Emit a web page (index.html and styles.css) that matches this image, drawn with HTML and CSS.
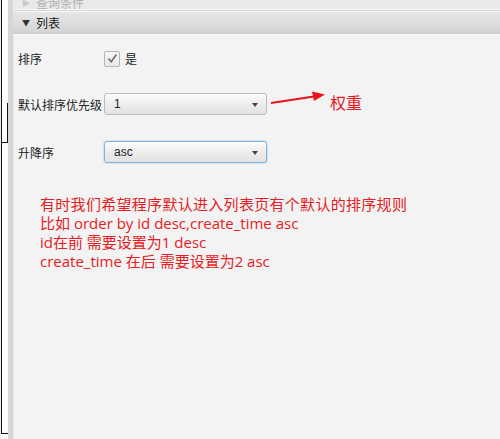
FILE: index.html
```html
<!DOCTYPE html>
<html>
<head>
<meta charset="utf-8">
<link rel="stylesheet" href="styles.css">
</head>
<body>
<div class="screen">
  <div class="gutter">
    <div class="gutter-top"></div>
    <div class="gutter-box"></div>
    <div class="gutter-rest"></div>
  </div>
  <div class="panel">
    <div class="hdr hdr-collapsed"><span class="tri">▶</span><span class="hdr-text">查询条件</span></div>
    <div class="hdr hdr-open"><span class="tri">▼</span><span class="hdr-text">列表</span></div>
    <div class="body">
      <div class="row row-check">
        <span class="label">排序</span>
        <span class="check"><svg width="13" height="13" viewBox="0 0 13 13"><path d="M2.5 6.5 L5.2 9.8 L10.5 2.5" fill="none" stroke="#6d6d6d" stroke-width="1.6"/></svg></span>
        <span class="check-text">是</span>
      </div>
      <div class="row row-prio">
        <span class="label">默认排序优先级</span>
        <span class="combo"><span class="val">1</span><span class="arr"></span></span>
        <svg class="red-arrow" width="58" height="16" viewBox="0 0 58 16"><path d="M1 12 L44 5.5" stroke="#e8141c" stroke-width="2" fill="none"/><path d="M42 0.5 L55 3.5 L44 10 Z" fill="#e8141c"/></svg>
        <span class="weight">权重</span>
      </div>
      <div class="row row-order">
        <span class="label">升降序</span>
        <span class="combo focused"><span class="val">asc</span><span class="arr"></span></span>
      </div>
      <div class="note">
        <p class="cjk">有时我们希望程序默认进入列表页有个默认的排序规则</p>
        <p>比如 order by id desc,create_time asc</p>
        <p>id在前 需要设置为1 desc</p>
        <p>create_time 在后 需要设置为2 asc</p>
      </div>
    </div>
  </div>
</div>
</body>
</html>
```
FILE: styles.css
```css
html, body {
  margin: 0;
  padding: 0;
  background: #ffffff;
}
.screen {
  display: flex;
  width: 500px;
  height: 439px;
  overflow: hidden;
  font-family: "Noto Sans CJK SC", "Liberation Sans", sans-serif;
}
.gutter {
  width: 8px;
  display: flex;
  flex-direction: column;
  background: #fdfdfd;
  border-left: 1px solid #ececec;
  box-sizing: border-box;
}
.gutter-top {
  height: 103px;
  border-left: 1.5px solid #111;
}
.gutter-box {
  height: 39px;
  border-left: 1.5px solid #111;
  border-right: 1px solid #111;
  border-bottom: 1px solid #111;
}
.gutter-rest {
  flex: 1;
  border-left: 1.5px solid #111;
  border-bottom: 1px solid #111;
  margin-bottom: 5px;
}
.panel {
  flex: 1;
  display: flex;
  flex-direction: column;
  background: #f3f3f3;
  border-left: 5px solid #d6d6d6;
  box-shadow: inset 1px 0 0 #e6e6e6;
}
.hdr {
  display: flex;
  align-items: center;
  color: #222;
  font-size: 12px;
}
.hdr-collapsed {
  height: 10px;
  overflow: hidden;
  align-items: flex-end;
  background: #e9e9e9;
  border-bottom: 1px solid #d6d6d6;
  color: #b0b0b0;
  box-shadow: inset 0 -1px 0 #f7f7f7;
}
.hdr-collapsed .tri, .hdr-collapsed .hdr-text {
  line-height: 22px;
  margin-bottom: -4px;
}
.hdr-collapsed .tri { color: #c8c8c8; font-size: 8px; }
.hdr-open {
  height: 21px;
  background: linear-gradient(#e6e6e6, #dadada 70%, #d3d3d3);
  border-top: 1px solid #f8f8f8;
  border-bottom: 1px solid #c9c9c9;
}
.tri {
  font-size: 8px;
  width: 10px;
  margin-left: 9px;
  color: #333;
}
.hdr-text {
  margin-left: 4px;
}
.body {
  flex: 1;
  border-top: 1px solid #fbfbfb;
  padding-left: 5px;
  font-size: 12px;
  color: #222;
}
.row {
  display: flex;
  align-items: center;
}
.label {
  width: 86px;
}
.row-check {
  margin-top: 15px;
  height: 17px;
}
.check {
  width: 14px;
  height: 14px;
  border: 1px solid #b5b5b5;
  border-radius: 2px;
  background: linear-gradient(#f8f8f8, #e6e6e6);
  display: flex;
  align-items: center;
  justify-content: center;
}
.check-text {
  margin-left: 5px;
}
.row-prio {
  margin-top: 26px;
  height: 22px;
}
.combo {
  width: 163px;
  height: 22px;
  box-sizing: border-box;
  border: 1px solid #bdbdbd;
  border-radius: 3px;
  background: linear-gradient(#fcfcfc, #ececec 55%, #e2e2e2);
  display: flex;
  align-items: center;
  justify-content: space-between;
  padding: 0 8px 0 9px;
  font-family: "Liberation Sans", sans-serif;
  font-size: 12px;
  color: #222;
}
.combo.focused {
  border: 1px solid #7fb5da;
  box-shadow: 0 0 0 1px #cfe4f3;
}
.arr {
  width: 0;
  height: 0;
  border-left: 3px solid transparent;
  border-right: 3px solid transparent;
  border-top: 4px solid #444;
  margin-top: 2px;
}
.red-arrow {
  margin-left: 3px;
  margin-top: -10px;
}
.weight {
  margin-left: 2px;
  margin-top: -5px;
  color: #e8141c;
  font-size: 16px;
}
.row-order {
  margin-top: 26px;
  height: 22px;
}
.note {
  margin-top: 32px;
  margin-left: 22px;
  color: #e51c24;
  font-size: 15px;
  line-height: 19px;
  font-family: "Open Sans", "Noto Sans CJK SC", sans-serif;
}
.note p {
  margin: 0;
}
.note p.cjk {
  letter-spacing: 0.3px;
}
```
